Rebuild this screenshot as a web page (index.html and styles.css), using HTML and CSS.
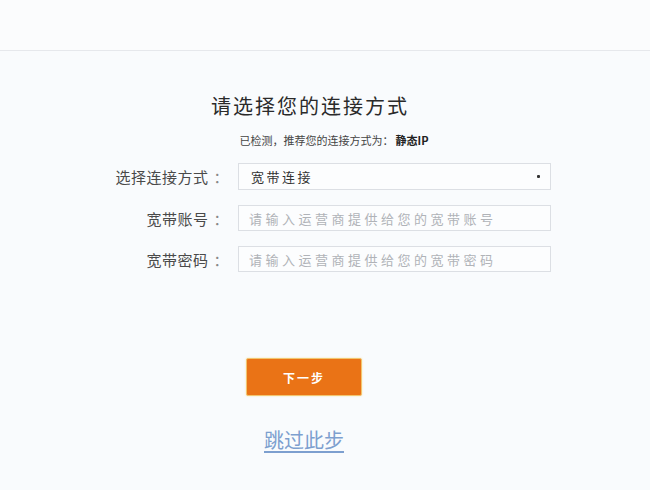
FILE: index.html
```html
<!DOCTYPE html>
<html lang="zh">
<head>
<meta charset="utf-8">
<link rel="stylesheet" href="styles.css">
</head>
<body>
<div class="header"></div>
<div class="main">
  <h1 class="title">请选择您的连接方式</h1>
  <p class="hint">已检测，推荐您的连接方式为：<b>静态IP</b></p>
  <div class="form">
    <div class="row">
      <label class="label">选择连接方式<span class="colon">：</span></label>
      <div class="select"><span>宽带连接</span><span class="dot"></span></div>
    </div>
    <div class="row">
      <label class="label">宽带账号<span class="colon">：</span></label>
      <div class="input">请输入运营商提供给您的宽带账号</div>
    </div>
    <div class="row">
      <label class="label">宽带密码<span class="colon">：</span></label>
      <div class="input">请输入运营商提供给您的宽带密码</div>
    </div>
  </div>
  <div class="actions">
    <button class="btn">下一步</button>
    <a class="skip" href="#">跳过此步</a>
  </div>
</div>
</body>
</html>
```
FILE: styles.css
```css
html, body {
  margin: 0;
  padding: 0;
}
body {
  width: 650px;
  height: 490px;
  background: #f9fbfd;
  font-family: "Noto Sans CJK SC", "Liberation Sans", sans-serif;
  color: #333;
  overflow: hidden;
}
.header {
  height: 50px;
  background: #fbfcfd;
  border-bottom: 1px solid #e6e8ec;
}
.main {
  display: flex;
  flex-direction: column;
  align-items: flex-start;
}
.title {
  margin: 42px 0 0 0;
  width: 620px;
  text-align: center;
  font-size: 20px;
  line-height: 26px;
  font-weight: normal;
  letter-spacing: 2px;
  color: #2a2a2a;
}
.hint {
  margin: 12px 0 0 0;
  width: 668px;
  text-align: center;
  font-size: 11px;
  line-height: 18px;
  color: #444;
}
.hint b {
  font-weight: bold;
  margin-left: 2px;
  color: #222;
}
.form {
  margin-top: 14px;
  display: flex;
  flex-direction: column;
  gap: 15px;
}
.row {
  display: flex;
  align-items: center;
}
.label {
  width: 238px;
  text-align: right;
  font-size: 15px;
  letter-spacing: 0.5px;
  color: #4a4a4a;
  padding-right: 9px;
  box-sizing: border-box;
}
.colon {
  margin-left: 5px;
  color: #888;
}
.select, .input {
  width: 313px;
  height: 27px;
  box-sizing: border-box;
  border: 1px solid #dcdfe4;
  background: #fcfdfe;
  display: flex;
  align-items: center;
  padding: 0 10px;
  font-size: 13px;
}
.select {
  justify-content: space-between;
  color: #333;
  padding-left: 12px;
  letter-spacing: 2.5px;
}
.dot {
  width: 3px;
  height: 3px;
  background: #333;
  border-radius: 1px;
}
.input {
  color: #b0b3b8;
  letter-spacing: 3.5px;
  height: 26px;
}
.actions {
  width: 608px;
  display: flex;
  flex-direction: column;
  align-items: center;
  margin-top: 86px;
}
.btn {
  width: 116px;
  height: 38px;
  background: #ea7316;
  border: 1px solid #f2c56e;
  border-radius: 2px;
  color: #fff;
  font-family: inherit;
  font-size: 12px;
  font-weight: bold;
  letter-spacing: 2px;
  box-shadow: 0 0 2px #f6dfa8;
}
.skip {
  margin-top: 31px;
  font-size: 20px;
  line-height: 26px;
  color: #7d9fcf;
  text-decoration: underline;
  text-underline-offset: 3px;
}
```
